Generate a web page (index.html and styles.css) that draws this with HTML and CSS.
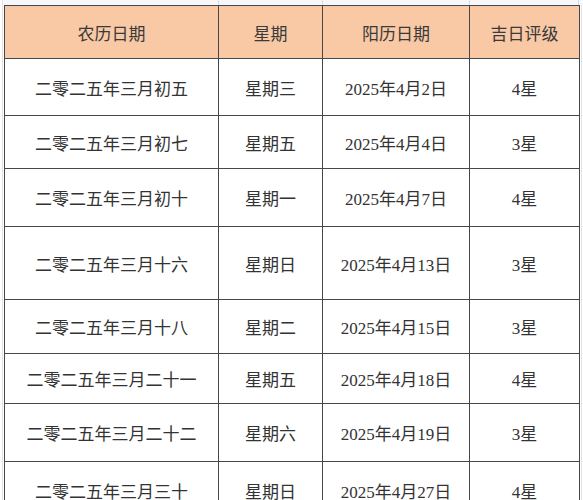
FILE: index.html
```html
<!DOCTYPE html>
<html lang="zh">
<head>
<meta charset="utf-8">
<link rel="stylesheet" href="styles.css">
</head>
<body>
<div class="sheet">
  <div class="topstrip">
    <span class="tick t1"></span><span class="tick t2"></span><span class="tick t3"></span><span class="tick t4"></span>
  </div>
  <table class="grid">
    <colgroup>
      <col class="c1"><col class="c2"><col class="c3"><col class="c4">
    </colgroup>
    <tr class="head">
      <th>农历日期</th><th>星期</th><th>阳历日期</th><th>吉日评级</th>
    </tr>
    <tr class="h57"><td>二零二五年三月初五</td><td>星期三</td><td>2025年4月2日</td><td>4星</td></tr>
    <tr class="h53"><td>二零二五年三月初七</td><td>星期五</td><td>2025年4月4日</td><td>3星</td></tr>
    <tr class="h58"><td>二零二五年三月初十</td><td>星期一</td><td>2025年4月7日</td><td>4星</td></tr>
    <tr class="h73"><td>二零二五年三月十六</td><td>星期日</td><td>2025年4月13日</td><td>3星</td></tr>
    <tr class="h54"><td>二零二五年三月十八</td><td>星期二</td><td>2025年4月15日</td><td>3星</td></tr>
    <tr class="h50"><td>二零二五年三月二十一</td><td>星期五</td><td>2025年4月18日</td><td>4星</td></tr>
    <tr class="h58"><td>二零二五年三月二十二</td><td>星期六</td><td>2025年4月19日</td><td>3星</td></tr>
    <tr class="h58"><td>二零二五年三月三十</td><td>星期日</td><td>2025年4月27日</td><td>4星</td></tr>
  </table>
</div>
</body>
</html>
```

FILE: styles.css
```css
html, body {
  margin: 0;
  padding: 0;
  background: #ffffff;
  overflow: hidden;
}

.sheet {
  position: relative;
  width: 583px;
  height: 500px;
  overflow: hidden;
  padding-left: 4px;
  box-sizing: border-box;
  background:
    linear-gradient(#dfe3ea, #dfe3ea) 2px 0 / 1px 100% no-repeat,
    linear-gradient(#dfe3ea, #dfe3ea) 581px 0 / 1px 100% no-repeat,
    #ffffff;
}

.topstrip {
  position: relative;
  height: 5px;
  background: #f7f8fb;
}

.tick {
  position: absolute;
  top: 0;
  width: 1px;
  height: 5px;
  background: #d7dbe3;
}
.t1 { left: 214px; }
.t2 { left: 318px; }
.t3 { left: 465px; }
.t4 { left: 574px; }

.grid {
  border-collapse: collapse;
  table-layout: fixed;
  width: 575px;
  font-family: "Liberation Serif", "Noto Sans CJK SC", serif;
  font-size: 17px;
  color: #333333;
}

.c1 { width: 214px; }
.c2 { width: 104px; }
.c3 { width: 147px; }
.c4 { width: 110px; }

.grid th,
.grid td {
  border: 1px solid #484848;
  text-align: center;
  vertical-align: middle;
  padding: 0;
  font-weight: 400;
}

.grid th {
  background: #f9c8a5;
  color: #3a3a3a;
}

.head { height: 53px; }
.h50 { height: 50px; }
.h53 { height: 53px; }
.h54 { height: 54px; }
.h57 { height: 57px; }
.h58 { height: 58px; }
.h73 { height: 73px; }
```
